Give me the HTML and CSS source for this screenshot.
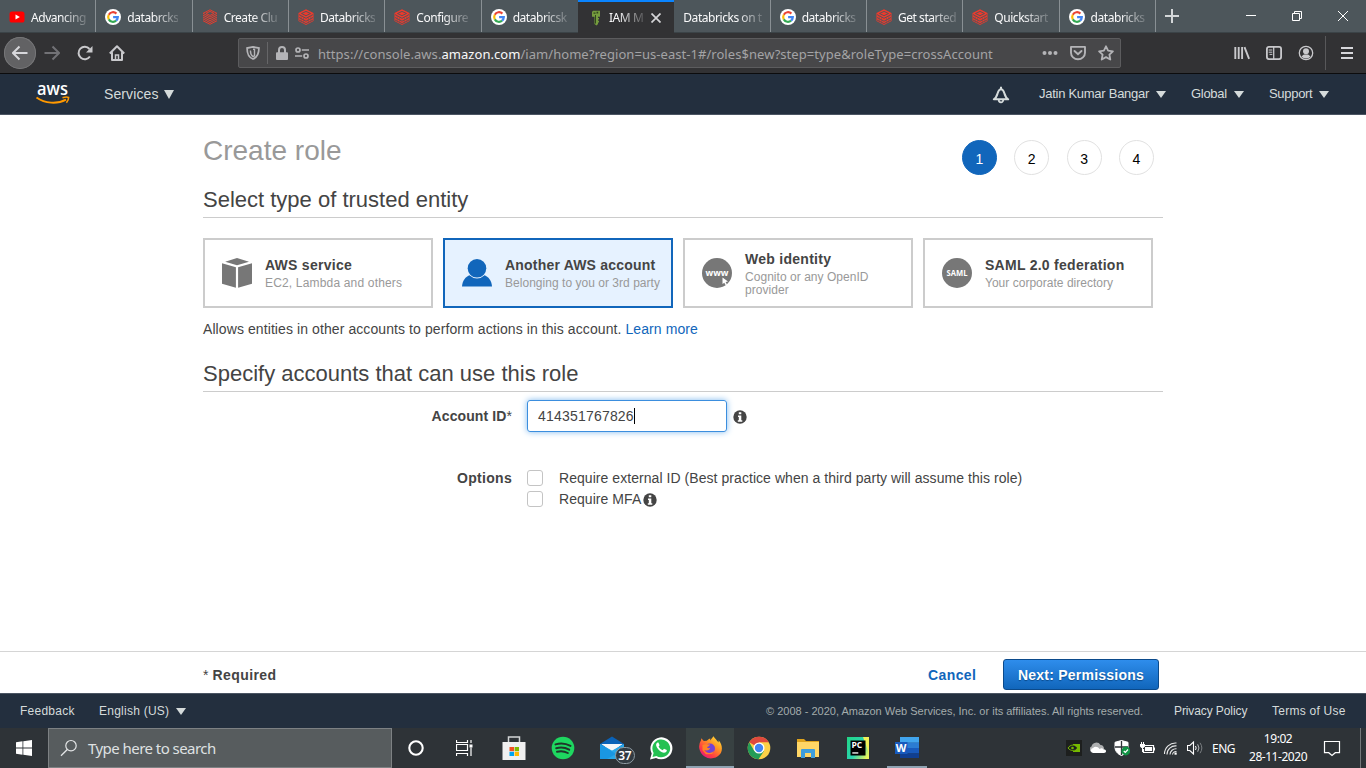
FILE: index.html
```html
<!DOCTYPE html>
<html lang="en">
<head>
<meta charset="utf-8">
<title>IAM Management Console</title>
<link rel="stylesheet" href="styles.css">
</head>
<body>
<svg class="defs" width="0" height="0" aria-hidden="true">
  <defs>
    <symbol id="google" viewBox="0 0 16 16">
      <circle cx="8" cy="8" r="8" fill="#fff"/>
      <g fill="none" stroke-width="2.2">
        <path d="M11.4 4.6A4.8 4.8 0 0 0 3.8 5.7" stroke="#ea4335"/>
        <path d="M3.8 5.7a4.8 4.8 0 0 0 0 4.7" stroke="#fbbc05"/>
        <path d="M3.8 10.4a4.8 4.8 0 0 0 7.3 1.2" stroke="#34a853"/>
        <path d="M11.1 11.6A4.8 4.8 0 0 0 12.8 8.1H8.1" stroke="#4285f4"/>
      </g>
    </symbol>
    <symbol id="bricks" viewBox="0 0 16 16">
      <path d="M.5 4 8 .3 15.500 4v8L8 15.900.5 12z" fill="#ee3a2c"/>
      <path d="M3.500 4.500 8 2.400l4.500 2.100L8 6.700zM1 5.600l7 3.700 7-3.700M1 8.500l7 3.700 7-3.700M1 11l7 3.600 7-3.600" fill="none" stroke="#4d565b" stroke-width=".9"/>
      <path d="M3.200 7v6M5.600 8.200v6M10.400 8.200v6M12.800 7v6" fill="none" stroke="#6a5052" stroke-width=".5"/>
    </symbol>
    <symbol id="bricks-thin" viewBox="0 0 16 16">
      <g fill="none" stroke="#e43d2e" stroke-width="1">
        <path d="M1 4.4 8 .8l7 3.6L8 8zM1 6.2l7 3.6 7-3.6M1 8.1l7 3.6 7-3.6M1 9.9l7 3.6 7-3.6M1 11.7l7 3.6 7-3.6"/>
        <path d="m4 4.4 4-2 4 2-4 2z"/>
      </g>
    </symbol>
    <symbol id="info" viewBox="0 0 14 14">
      <circle cx="7" cy="7" r="6.7" fill="#444"/>
      <path d="M5.8 2.3h2.5v2H5.8zM5 5.6h3.3v4.6h1v1.5H4.8v-1.5h1V7.1H5z" fill="#fff"/>
    </symbol>
  </defs>
</svg>

<div class="tabbar">
  <div class="tabs">
    <div class="tab"><svg class="fav" viewBox="0 0 16 16"><rect x=".5" y="2.5" width="15" height="11" rx="2.6" fill="#f00"/><path d="m6.5 5.6 4.4 2.4-4.4 2.4z" fill="#fff"/></svg><span class="label">Advancing</span></div>
    <div class="tab"><svg class="fav"><use href="#google"/></svg><span class="label">databrcks</span></div>
    <div class="tab"><svg class="fav"><use href="#bricks-thin"/></svg><span class="label">Create Clu</span></div>
    <div class="tab"><svg class="fav"><use href="#bricks"/></svg><span class="label">Databricks</span></div>
    <div class="tab"><svg class="fav"><use href="#bricks"/></svg><span class="label">Configure</span></div>
    <div class="tab last"><svg class="fav"><use href="#google"/></svg><span class="label">databricsk</span></div>
    <div class="tab active"><svg class="fav" viewBox="0 0 16 16"><path d="M5 .8h7v6h-2v1.100h1v1.600h-1v1.200h1v1.700h-1v1.600L8.600 15.500 6.500 14V6.800H4V2z" fill="#759c3e"/><path d="M5.500 2.500h2v1.200h-2zM8.500 1.700h1.700v1.800H8.500zM7 5h1v9L7 13z" fill="#30461d"/></svg><span class="label">IAM M</span><svg class="close" viewBox="0 0 10 10"><path d="m.5.5 9 9M9.500.5l-9 9" stroke="#d5d5d7" stroke-width="1.700"/></svg></div>
    <div class="tab"><span class="label">Databricks on t</span></div>
    <div class="tab"><svg class="fav"><use href="#google"/></svg><span class="label">databricks</span></div>
    <div class="tab"><svg class="fav"><use href="#bricks"/></svg><span class="label">Get started</span></div>
    <div class="tab"><svg class="fav"><use href="#bricks"/></svg><span class="label">Quickstart</span></div>
    <div class="tab"><svg class="fav"><use href="#google"/></svg><span class="label">databricks</span></div>
  </div>
  <svg class="newtab" viewBox="0 0 16 16"><path d="M8 1v14M1 8h14" stroke="#d3d6d8" stroke-width="2"/></svg>
  <div class="winctl">
    <svg viewBox="0 0 12 12"><path d="M1 5.500h10" stroke="#fff"/></svg>
    <svg viewBox="0 0 12 12"><path d="M1.500 3.500h7v7h-7zM3.500 3.500v-2h7v7h-2" fill="none" stroke="#fff"/></svg>
    <svg viewBox="0 0 12 12"><path d="m1 1 10 10M11 1 1 11" stroke="#fff"/></svg>
  </div>
</div>

<div class="toolbar">
  <div class="nav-buttons">
    <span class="nb back"><svg viewBox="0 0 16 16"><path d="M15.500 8H1.500M7.500 1.500 1 8l6.500 6.500" fill="none" stroke="#d7d7db" stroke-width="2"/></svg></span>
    <span class="nb"><svg viewBox="0 0 16 16"><path d="M.5 8h14M8.500 1.500 15 8l-6.500 6.500" fill="none" stroke="#727276" stroke-width="2"/></svg></span>
    <span class="nb"><svg viewBox="0 0 16 16"><path d="M12.900 11.500A6.200 6.200 0 1 1 12.500 4" fill="none" stroke="#c9c9cc" stroke-width="2"/><path d="M15.500 1v6.500H9z" fill="#c9c9cc"/></svg></span>
    <span class="nb"><svg viewBox="0 0 16 16"><path d="M.8 8.500 8 1.200l7.200 7.300M3 7.200V15h10V7.200" fill="none" stroke="#c9c9cc" stroke-width="2" stroke-linejoin="round"/><path d="M6.500 15v-5h3v5" fill="none" stroke="#c9c9cc" stroke-width="1.500"/></svg></span>
  </div>
  <div class="urlbar">
    <svg class="u-shield" viewBox="0 0 14 14"><path d="M7 .9 12.900 2c0 5.500-1 9-5.900 11C2 11 1.100 7.500 1.100 2z" fill="none" stroke="#b4b4b7" stroke-width="1.800"/><path d="M7 3.300h1.500v6.500L7 10.700C5 9.300 4.400 7.500 4.400 4.500" fill="none" stroke="#b4b4b7" stroke-width="1.400"/></svg>
    <i class="u-sep"></i>
    <svg class="u-lock" viewBox="0 0 12 14"><path d="M3 7V4a3 3 0 0 1 6 0v3" fill="none" stroke="#b4b4b7" stroke-width="2"/><rect y="6.200" width="12" height="7.800" rx="1" fill="#b4b4b7"/></svg>
    <svg class="u-perm" viewBox="0 0 14 12"><g fill="none" stroke="#b4b4b7" stroke-width="1.700"><circle cx="3" cy="3" r="2"/><path d="M6.800 3H14M0 9h7.200"/><circle cx="11" cy="9" r="2"/></g></svg>
    <span class="url">https://console.aws.<b>amazon.com</b>/iam/home?region=us-east-1#/roles$new?step=type&amp;roleType=crossAccount</span>
    <svg class="u-dots" viewBox="0 0 16 4"><g fill="#b4b4b7"><circle cx="2.500" cy="2" r="2"/><circle cx="8" cy="2" r="2"/><circle cx="13.500" cy="2" r="2"/></g></svg>
    <svg class="u-pocket" viewBox="0 0 16 16"><path d="M1 1.900h14v5.800a7 6.600 0 0 1-14 0z" fill="none" stroke="#b4b4b7" stroke-width="1.900" stroke-linejoin="round"/><path d="m4.500 6 3.500 3.300L11.500 6" fill="none" stroke="#b4b4b7" stroke-width="1.900" stroke-linecap="round"/></svg>
    <svg class="u-star" viewBox="0 0 16 16"><path d="m8 1.300 2.100 4.400 4.800.6-3.500 3.300.9 4.900L8 12.100l-4.300 2.400.9-4.900L1.100 6.300l4.800-.6z" fill="none" stroke="#b4b4b7" stroke-width="1.800" stroke-linejoin="round"/></svg>
  </div>
  <div class="tools">
    <svg viewBox="0 0 16 16"><path d="M1.300 2v12M4.700 2v12M8.100 2v12M10.500 2.200l4.600 11.600" stroke="#c9c9cc" stroke-width="1.900"/></svg>
    <svg viewBox="0 0 16 16"><rect x=".9" y="1.900" width="14.200" height="12.200" rx="2" fill="none" stroke="#c9c9cc" stroke-width="1.800"/><path d="M7.700 2v12" stroke="#c9c9cc" stroke-width="1.300"/><path d="M2.700 5h3.600M2.700 7.200h3.600M3.500 9.400h2.800" stroke="#c9c9cc"/></svg>
    <svg viewBox="0 0 16 16"><circle cx="8" cy="8" r="6.700" fill="none" stroke="#c9c9cc" stroke-width="1.300"/><circle cx="8" cy="6.200" r="3" fill="#c9c9cc"/><path d="M3.500 11.500c1.300-1.200 2-2 2.500-2h4c.5 0 1.200.8 2.500 2A6 6 0 0 1 3.500 11.500z" fill="#c9c9cc"/></svg>
  </div>
  <i class="tool-sep"></i>
  <svg class="burger" viewBox="0 0 14 14"><path d="M1 2h12M1 7h12M1 12h12" stroke="#d7d7db" stroke-width="2"/></svg>
</div>

<header class="awsnav">
  <svg class="awslogo" viewBox="0 0 34 22"><text x="1" y="12" class="awsword" textLength="31" lengthAdjust="spacingAndGlyphs">aws</text><path d="M.5 14.500c8.500 6 20.500 7 29.500 2.100" fill="none" stroke="#f90" stroke-width="1.900"/><path d="M26.500 14.700c2.600-.8 4.800-.9 6.100-.3.100 1.500-.8 3.700-2.200 5.300" fill="none" stroke="#f90" stroke-width="1.600"/></svg>
  <span class="services">Services<i class="caret big"></i></span>
  <svg class="bell" viewBox="0 0 18 18"><path d="M9 .8v2M1.800 13.300c2.500-1.300 3-3.300 3.800-6C6.400 4.600 7.500 3.200 9 3.200s2.600 1.400 3.400 4.100c.8 2.700 1.300 4.700 3.800 6z" fill="none" stroke="#d5dbdb" stroke-width="2" stroke-linejoin="round"/><path d="M6.700 13.500a2.300 2.900 0 0 0 4.600 0" fill="none" stroke="#d5dbdb" stroke-width="1.800"/></svg>
  <span class="acct">Jatin Kumar Bangar<i class="caret"></i></span>
  <span class="region">Global<i class="caret"></i></span>
  <span class="support">Support<i class="caret"></i></span>
</header>

<main class="content">
  <div class="wrap">
    <div class="titlebar">
      <h1>Create role</h1>
      <ol class="steps"><li class="on">1</li><li>2</li><li>3</li><li>4</li></ol>
    </div>
    <h2 class="h-entity">Select type of trusted entity</h2>
    <div class="cards">
      <div class="card">
        <svg viewBox="0 0 30 30"><path d="M15 0 27 3.700 15 7.200 3.200 3.700zM0 5.300l13.900 4v20.500L0 25.700zM30 5.300v20.400l-13.900 4.100V9.300z" fill="#777"/></svg>
        <div><b class="t1">AWS service</b><span>EC2, Lambda and others</span></div>
      </div>
      <div class="card sel">
        <svg viewBox="0 0 30 30"><path d="M0 28.500C.3 23 3.500 18.500 8 17h14c4.500 1.500 7.700 6 8 11.500z" fill="#1166bb"/><circle cx="15" cy="10.300" r="10.200" fill="#e6f2ff"/><circle cx="15" cy="10.300" r="9.300" fill="#1166bb"/></svg>
        <div><b class="t2">Another AWS account</b><span class="s2">Belonging to you or 3rd party</span></div>
      </div>
      <div class="card">
        <svg viewBox="0 0 30 30"><circle cx="15" cy="15" r="15" fill="#777"/><text x="15" y="17.500" class="badge www" text-anchor="middle" textLength="23" lengthAdjust="spacingAndGlyphs">www</text><path d="m20.500 19.500 5.500 4-2.400.5 1.400 2.600-1.300.700-1.400-2.600-1.800 1.300z" fill="#fff"/></svg>
        <div class="two-line"><b class="t3">Web identity</b><span class="s3">Cognito or any OpenID provider</span></div>
      </div>
      <div class="card">
        <svg viewBox="0 0 30 30"><circle cx="15" cy="15" r="15" fill="#777"/><text x="15" y="18" class="badge" text-anchor="middle" textLength="21" lengthAdjust="spacingAndGlyphs">SAML</text></svg>
        <div><b class="t4">SAML 2.0 federation</b><span class="s4">Your corporate directory</span></div>
      </div>
    </div>
    <p class="desc">Allows entities in other accounts to perform actions in this account. <a>Learn more</a></p>
    <h2 class="h-accounts">Specify accounts that can use this role</h2>
    <div class="row id-row">
      <label>Account ID<span class="star">*</span></label>
      <div class="field">414351767826<i class="cursor"></i></div>
      <svg class="info"><use href="#info"/></svg>
    </div>
    <div class="row opt-row">
      <label>Options</label>
      <div class="opts">
        <div class="opt"><i class="box"></i><span class="o1">Require external ID (Best practice when a third party will assume this role)</span></div>
        <div class="opt"><i class="box"></i><span>Require MFA</span><svg class="info"><use href="#info"/></svg></div>
      </div>
    </div>
  </div>
</main>

<div class="actionbar">
  <b class="required"><span>*</span> Required</b>
  <b class="cancel">Cancel</b>
  <b class="next">Next: Permissions</b>
</div>

<footer class="awsfoot">
  <span class="fb">Feedback</span>
  <span class="lang">English (US)<i class="caret"></i></span>
  <span class="copy">© 2008 - 2020, Amazon Web Services, Inc. or its affiliates. All rights reserved.</span>
  <span class="priv">Privacy Policy</span>
  <span class="terms">Terms of Use</span>
</footer>

<div class="taskbar">
  <div class="start"><svg width="16" height="16" viewBox="0 0 16 16"><path d="M0 2.200 6.500 1.300v6.200H0zM7.300 1.200 16 0v7.500H7.300zM0 8.400h6.500v6.300L0 13.800zM7.300 8.400H16V16l-8.700-1.200z" fill="#fff"/></svg></div>
  <div class="search"><svg width="18" height="18" viewBox="0 0 18 18"><circle cx="11" cy="6.700" r="5.200" fill="none" stroke="#e4e6e7" stroke-width="1.200"/><path d="M7.300 10.500 1 16.800" stroke="#e4e6e7" stroke-width="1.300"/></svg><span>Type here to search</span></div>
  <div class="sys"><svg width="18" height="18" viewBox="0 0 18 18"><circle cx="9" cy="9" r="6.700" fill="none" stroke="#fff" stroke-width="2.100"/></svg></div>
  <div class="sys"><svg width="17" height="16" viewBox="0 0 17 16"><path d="M.5 0v2.500h11V0M.5 16v-2.500h11V16M.5 4.500h11v6H.5zM15 0v3M15 7.500V16" fill="none" stroke="#fff" stroke-width="1.200"/><path d="M13.500 4.500h3v3h-3z" fill="#fff"/></svg></div>
  <div class="apps">
    <div class="app"><svg viewBox="0 0 24 24"><path d="M6.500 7V1h11v6" fill="none" stroke="#d4d6d7" stroke-width="1.500"/><path d="M.5 6h23v18H.5z" fill="#f0f0f0"/><path d="M7.500 11H12v4.200H7.500z" fill="#f25022"/><path d="M12.600 11h4.400v4.200h-4.400z" fill="#7fba00"/><path d="M7.500 15.800H12V20H7.500z" fill="#00a4ef"/><path d="M12.600 15.800h4.400V20h-4.400z" fill="#ffb900"/></svg></div>
    <div class="app"><svg viewBox="0 0 24 24"><circle cx="12" cy="12" r="11.300" fill="#1ed760"/><path d="M4.500 8.400c5-1.500 10.500-.9 15 1.500M5.200 12.200c4.500-1.300 9-.8 13 1.500M6 15.700c3.800-1 7.500-.6 10.800 1.300" fill="none" stroke="#20352a" stroke-width="2" stroke-linecap="round"/></svg></div>
    <div class="app"><svg viewBox="0 0 24 24"><path d="M0 8 12 .5 24 8v15H0z" fill="#0a62b7"/><path d="M1.500 8h21L12 16z" fill="#f4f6f8"/><path d="m0 8 12 6.500L24 8v15H0z" fill="#28a8ea"/><path d="M1.500 8h21L12 14.300z" fill="#f4f6f8"/><path d="m0 8 16 10-9 5H0z" fill="#1490df" opacity=".7"/></svg><span class="count">37</span></div>
    <div class="app"><svg viewBox="0 0 24 24"><path d="M1 23.500 2.700 17.500A11 11 0 1 1 7 21.900z" fill="#fff"/><path d="m3.500 21 1.100-4.100A8.900 8.900 0 1 1 7.500 19.900z" fill="#24c152"/><path d="M8.500 6.500c-1.800 1-1.800 3-.4 5.200 2 3 4.200 4.700 6.800 5.100 1.700 0 3.200-1.200 2.900-2.700l-2.800-1.400-1.300 1.500c-2-.8-3.200-2-4.100-3.700l1-1.300-1.200-2.700z" fill="#fff"/></svg></div>
    <div class="app current"><svg viewBox="0 0 24 24"><defs><linearGradient id="fox" x1="1" y1="0" x2=".2" y2="1"><stop offset="0" stop-color="#fff044"/><stop offset=".4" stop-color="#ff9a22"/><stop offset=".75" stop-color="#ff3d43"/><stop offset="1" stop-color="#e31587"/></linearGradient></defs><path d="M15.500.2c1 2.200 3.700 4 5 6.300l.2-2.200c3.400 4 4 8.700 2.200 12.600A11.600 11.600 0 1 1 3 4.200l.3-2 2.500 2.700 3-.2c1.200-1.200 2.500-2 3.500-2.200l-.2 2.100z" fill="url(#fox)"/><circle cx="12" cy="12.500" r="5" fill="#7343d5"/><path d="M4.500 9c3-1.700 5.500-.2 7.500-.7-.3 2-2.500 2.200-3 3.200.8.800 2 .7 3.200.5-.6 2.400-3.800 3.200-6 1.700 1.200 3.800 7.600 4.800 10.300.3L14 18l-6 .2-3.500-4z" fill="#ff8426"/></svg></div>
    <div class="app"><svg viewBox="0 0 24 24"><circle cx="12" cy="12" r="11.300" fill="#fdd047"/><path d="M12 12 2.200 6.300A11.300 11.300 0 0 1 21.800 6.300H12z" fill="#df493d"/><path d="M2.200 6.300A11.300 11.300 0 0 0 11.500 23.300L17 15H7.300z" fill="#249c58"/><circle cx="12" cy="12" r="5.500" fill="#fff"/><circle cx="12" cy="12" r="4.200" fill="#4285f4"/></svg></div>
    <div class="app"><svg viewBox="0 0 24 24"><path d="M1 3h7l2 2h13v3H1z" fill="#dfa31c"/><path d="M1 6h22v15H1z" fill="#ffd666"/><path d="M5 22v-8q0-1 1-1h12q1 0 1 1v8h-4v-5H9v5z" fill="#3d9ddb"/></svg></div>
    <div class="app"><svg viewBox="0 0 24 24"><defs><linearGradient id="py" x1="0" y1=".1" x2="1" y2=".8"><stop offset="0" stop-color="#22d788"/><stop offset=".55" stop-color="#2ad3b0"/><stop offset="1" stop-color="#e9f45c"/></linearGradient></defs><path d="M1 1h22v22H1z" fill="url(#py)"/><path d="M17 1h6v17z" fill="#f3ef58"/><path d="M4.500 4.500h15v15h-15z"/><text x="5.500" y="12.300" class="pc">PC</text><path d="M6.300 16.300h6v1.300h-6z" fill="#fff"/></svg></div>
    <div class="app word"><svg viewBox="0 0 24 24"><path d="M5 1h19v5.800H5z" fill="#41a5ee"/><path d="M5 6.500h19v5.700H5z" fill="#2b7cd3"/><path d="M5 12h19v5.500H5z" fill="#185abd"/><path d="M5 17.300h19V22H5z" fill="#103f91"/><path d="M0 6h12.500v12H0z" fill="#185abd"/><text x=".8" y="15.700" class="w">W</text></svg></div>
  </div>
  <div class="tray">
    <svg viewBox="0 0 16 16"><path d="M0 0h16v16H0z" fill="#1d1f1e"/><path d="M7 4h7v8H7z" fill="#76b900"/><path d="M2 8c2.500-3.800 7-3.800 9 0-2 3.300-6.500 3.300-9 0z" fill="#1d1f1e" stroke="#76b900"/><path d="M7.500 5.800c1.500.4 2.500 1.200 3.200 2.200-.8 1.200-1.700 1.800-3.200 2" fill="none" stroke="#1d1f1e"/><circle cx="6.500" cy="8" r="1.300" fill="#76b900"/></svg>
    <svg viewBox="0 0 16 16"><path d="M1.500 12a3 3 0 0 1 0-5.500A4.900 4.900 0 0 1 10.500 5C13 5 14 7 14 9l-9 3z" fill="#aeb0b1"/><path d="M3 13a2.600 2.600 0 0 1 0-5.100C5 6 8 6.500 9.500 9 11 8 12.500 8 13.500 9.300c2 0 2.500 1 2.500 2 0 1-.8 1.700-2 1.700z" fill="#fff"/></svg>
    <svg viewBox="0 0 16 16"><path d="M7.500.5 14 2.300v5c0 4-3 7-6.500 8.200C4 14.300 1 11.300 1 7.300v-5z" fill="#fff" stroke="#fff"/><path d="M7.500 1v14M1 7h13" stroke="#2e3337" stroke-width="1.300"/><circle cx="11.800" cy="11" r="4.400" fill="#119345"/><path d="m9.800 11 1.500 1.500 2.700-3" fill="none" stroke="#fff" stroke-width="1.200"/></svg>
    <svg viewBox="0 0 16 16"><path d="M4.500 5.500h10v7h-10V9" fill="none" stroke="#fff" stroke-width="1.200"/><path d="M6 7h7v4H6zM15 7.500h1v3h-1zM1 4h5v2.500L4.500 8h-2L1 6.500zM2 2h1v2H2zM4 2h1v2H4zM3 8h1v4H3z" fill="#fff"/></svg>
    <svg viewBox="0 0 16 16"><g fill="none" stroke="#e7e8e9" stroke-width="1.100"><path d="M1.500 14A11 11 0 0 1 13.500 3"/><path d="M4 14.500a8.500 8.500 0 0 1 9.500-8.600M7 14.500a6 6 0 0 1 6.500-5.700M9.500 14.500a3.500 3.500 0 0 1 4-3"/></g><path d="M11.500 12.500h2.200v2.200h-2.200z" fill="#fff"/></svg>
    <svg viewBox="0 0 16 16"><path d="M.5 5.500h2.300L6.500 2v12l-3.700-3.500H.5z" fill="none" stroke="#fff" stroke-width="1.100"/><path d="M8.500 6q1.300 2 0 4" fill="none" stroke="#fff"/><path d="M10.700 4.300q2.500 3.700 0 7.400" fill="none" stroke="#b9bbbd"/><path d="M13 2.800q3.700 5.200 0 10.400" fill="none" stroke="#7b7f82"/></svg>
  </div>
  <span class="eng">ENG</span>
  <div class="clock"><span>19:02</span><span class="date">28-11-2020</span></div>
  <svg class="notif" viewBox="0 0 18 18"><path d="M1.500 2.500h15v11.200h-4.200L9 16.500l-3.300-2.800H1.500z" fill="none" stroke="#fff" stroke-width="1.200"/></svg>
  <i class="peek"></i>
</div>
</body>
</html>
```

FILE: styles.css
```css
* { box-sizing: border-box; }
body { margin: 0; width: 1366px; height: 768px; overflow: hidden; display: flex; flex-direction: column; background: #fff; color: #444; font: 14px "Liberation Sans", Arial, sans-serif; }
svg { display: block; flex: none; }
.defs { display: none; }
h1, h2, p, ol { margin: 0; padding: 0; font-weight: normal; }

/* Browser tabs */
.tabbar { height: 33px; flex: none; display: flex; align-items: center; background: #4d565b; border-bottom: 1px solid #3b4347; font: 12px "Noto Sans", sans-serif; color: #f9f9fa; }
.tabs { width: 1156px; height: 32px; display: flex; }
.tab { flex: none; width: 96.33px; height: 32px; padding: 2px 6px 0 9px; display: flex; align-items: center; gap: 6px; border-right: 1px solid #899094; }
.tab.last { border-right-color: transparent; }
.tab .fav { width: 16px; height: 16px; }
.tab .label { flex: none; white-space: nowrap; letter-spacing: -.45px; mask-image: linear-gradient(90deg, #000 calc(100% - 25px), rgba(0,0,0,.2)); }
.tab.active { height: 33px; background: #323234; border-top: 2px solid #0a84ff; border-right: 0; padding: 0 13px 0 10px; gap: 5px; }
.tab.active .close { width: 10px; height: 10px; margin-left: auto; }
.newtab { width: 16px; height: 16px; margin-left: 8px; }
.winctl { display: flex; gap: 34px; margin-left: 65px; }
.winctl svg { width: 12px; height: 12px; }

/* Browser toolbar */
.toolbar { height: 41px; flex: none; display: flex; align-items: center; background: #323234; border-bottom: 1px solid #0c0c0d; padding-left: 4px; }
.nav-buttons { display: flex; width: 234px; }
.nb { width: 32.3px; height: 32px; display: flex; align-items: center; justify-content: center; border-radius: 50%; }
.nb svg { width: 16px; height: 16px; }
.nb.back { background: #626264; box-shadow: inset 0 0 0 1px #767678; }
.urlbar { width: 883px; height: 30px; display: flex; align-items: center; background: #474749; border: 1px solid #5c5c5e; border-radius: 2px; padding: 0 6px 0 7px; }
.u-shield { width: 14px; height: 14px; }
.u-sep { width: 1px; height: 22px; background: #666668; margin: 0 8px 0 7px; }
.u-lock { width: 12px; height: 14px; }
.u-perm { width: 14px; height: 12px; margin: 0 9px 0 7px; }
.url { flex: 1; padding-top: 2px; font: 13px "Noto Sans", sans-serif; letter-spacing: .05px; color: #a3a3a5; white-space: nowrap; }
.url b { color: #f9f9fa; font-weight: normal; }
.u-dots { width: 16px; height: 4px; }
.u-pocket { width: 16px; height: 16px; margin: 0 12px; }
.u-star { width: 16px; height: 16px; }
.tools { display: flex; gap: 16px; margin-left: 113px; }
.tools svg { width: 16px; height: 16px; }
.tool-sep { width: 1px; height: 34px; background: #58585a; margin: 0 14px 0 11px; }
.burger { width: 14px; height: 14px; }

/* Console navigation */
.awsnav { height: 41px; flex: none; display: flex; align-items: center; background: #232f3e; border-bottom: 1px solid #4b5563; color: #d5dbdb; font-size: 13px; padding: 0 0 1px 37px; white-space: nowrap; }
.awslogo { width: 34px; height: 22px; overflow: visible; margin-left: -1px; }
.awsword { font: 600 18px "Open Sans", sans-serif; fill: #fff; }
.caret { display: inline-block; border: 5px solid transparent; border-top: 7px solid #d5dbdb; border-bottom: 0; margin-left: 7px; }
.caret.big { border-width: 9px 5.500px 0; margin-left: 6px; }
.services { font-size: 14px; letter-spacing: .1px; margin-left: 34px; width: 888px; padding-top: 1px; }
.bell { width: 18px; height: 18px; margin-top: 3px; }
.acct { width: 152px; margin-left: 29px; letter-spacing: -.27px; }
.region { width: 78px; letter-spacing: -.3px; }
.support { width: 70px; letter-spacing: -.3px; }

/* Role form */
.content { height: 536px; flex: none; background: #fff; }
.wrap { width: 960px; margin-left: 203px; padding-top: 19px; }
.titlebar { height: 60px; display: flex; justify-content: space-between; align-items: flex-start; }
h1 { font-size: 28px; line-height: 34px; color: #999; }
.steps { display: flex; list-style: none; gap: 17.400px; margin: 6px 9px 0 0; }
.steps li { width: 35px; height: 35px; border-radius: 50%; border: 1px solid #e1e1e1; color: #000; text-align: center; line-height: 37px; font-size: 14px; }
.steps .on { background: #1166bb; border-color: #1166bb; color: #fff; }
h2 { font-size: 22px; line-height: 26px; border-bottom: 1px solid #ccc; color: #444; }
.h-entity { height: 24px; line-height: 12px; }
.cards { display: flex; gap: 10px; margin-top: 20px; }
.card { width: 230px; height: 70px; border: 2px solid #ccc; display: flex; align-items: center; padding-left: 17px; }
.card svg { width: 30px; height: 30px; margin-right: 13px; }
.card div { display: flex; flex-direction: column; white-space: nowrap; }
.card .two-line { padding-top: 2px; }
.card b { font-size: 14px; line-height: 17px; letter-spacing: .27px; }
.card .t2 { letter-spacing: .2px; }
.card span { font-size: 12px; line-height: 13px; color: #999; letter-spacing: .17px; padding-top: 3px; }
.card .s2 { letter-spacing: .03px; }
.card .s3 { width: 140px; white-space: normal; letter-spacing: .04px; }
.card .s4 { letter-spacing: .02px; }
.card.sel { background: #e6f2ff; border-color: #1166bb; }
.badge { font: bold 8px "Open Sans", sans-serif; fill: #fff; }
.badge.www { font-size: 9px; }
.desc { margin-top: 13px; line-height: 16px; white-space: nowrap; letter-spacing: .088px; }
.desc a { color: #1166bb; }
.h-accounts { margin-top: 23px; height: 32px; line-height: 27px; }
.row { display: flex; }
.row label { width: 309px; text-align: right; font-weight: bold; margin-right: 15px; letter-spacing: .1px; }
.star { font-weight: normal; }
.id-row { margin-top: 8px; height: 32px; align-items: center; }
.field { width: 200px; height: 32px; border: 1px solid #3b8ede; border-radius: 3px; box-shadow: 0 0 6px #7eb9ee; padding-left: 10px; display: flex; align-items: center; letter-spacing: .2px; }
.cursor { width: 1px; height: 16px; background: #000; }
.info { width: 14px; height: 14px; }
.id-row .info { margin: 2px 0 0 6px; }
.opt-row { margin-top: 35px; line-height: 21px; }
.opt-row label { padding-top: 1px; letter-spacing: .3px; }
.opt { height: 21px; display: flex; align-items: center; white-space: nowrap; letter-spacing: .055px; }
.opt span { padding-top: 1px; }
.box { width: 16px; height: 16px; border: 1px solid #c4c4c4; border-radius: 3px; margin-right: 16px; }
.opt .info { margin: 2px 0 0 2px; }

.actionbar { height: 42px; flex: none; display: flex; align-items: center; border-top: 1px solid #d5d5d5; padding: 4px 0 0 203px; letter-spacing: .4px; }
.required { width: 725px; }
.required span { font-weight: normal; letter-spacing: -.2px; }
.cancel { width: 75px; color: #1166bb; }
.next { width: 156px; height: 31px; line-height: 30px; text-align: center; color: #fff; background: linear-gradient(#2e8dec, #1166bb); border: 1px solid #0b4a8b; border-radius: 3px; text-shadow: 0 1px 1px #0b4a8b; letter-spacing: .23px; }

/* Console footer */
.awsfoot { height: 35px; flex: none; display: flex; align-items: center; background: #232f3e; border-top: 1px solid #4b5563; color: #d5dbdb; font-size: 12px; padding-left: 20px; white-space: nowrap; letter-spacing: .25px; }
.fb { width: 79px; }
.lang { width: 667px; }
.copy { width: 408px; font-size: 11px; color: #a3acac; letter-spacing: 0; }
.priv { width: 98px; letter-spacing: -.1px; }

/* Desktop taskbar */
.taskbar { height: 40px; flex: none; display: flex; align-items: center; background: #2e3337; color: #fff; font-family: "Noto Sans", sans-serif; }
.start { width: 48px; display: flex; justify-content: center; }
.search { width: 344px; height: 40px; border: 1px solid #7d8183; background: #575c5e; display: flex; align-items: center; padding-left: 11px; gap: 10px; color: #dfe1e2; font-size: 15px; letter-spacing: -.55px; }
.sys { width: 48px; display: flex; justify-content: center; }
.apps { display: flex; margin-left: 1.700px; height: 40px; }
.app { width: 49.050px; height: 40px; display: flex; align-items: center; justify-content: center; position: relative; }
.app svg { width: 24px; height: 24px; }
.app.current { background: linear-gradient(#384142, #384142) center / 48px 100% no-repeat; }
.app.current::after, .app.word::after { content: ""; position: absolute; bottom: 0; left: .5px; width: 48px; height: 2px; background: #8fa3b2; }
.app.word::after { left: 4.500px; width: 40px; }
.count { position: absolute; left: 27px; top: 19px; width: 20px; height: 17px; border: 1px solid #8f9ba2; border-radius: 9px; background: #323b42; font: 600 12px/15px "Noto Sans", sans-serif; letter-spacing: -.4px; text-align: center; }
.pc { font: bold 8.500px "Open Sans", sans-serif; fill: #fff; }
.w { font: bold 11px "Open Sans", sans-serif; fill: #fff; }
.tray { display: flex; gap: 8.200px; margin-left: 135px; }
.tray svg { width: 16px; height: 16px; }
.eng { width: 36px; font-size: 12px; letter-spacing: -.500px; margin-left: 9px; }
.clock { width: 60px; display: flex; flex-direction: column; align-items: center; font-size: 12px; line-height: 18px; letter-spacing: -.450px; }
.notif { width: 18px; height: 18px; margin-left: 15px; }
.peek { width: 1px; height: 40px; background: #74787a; margin-left: 19px; }
```
